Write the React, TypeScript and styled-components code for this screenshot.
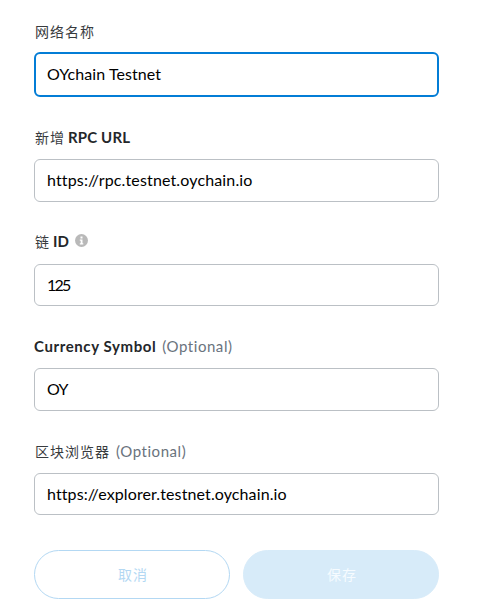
import React from "react";
import styled, { createGlobalStyle } from "styled-components";

const GlobalStyle = createGlobalStyle`
  body {
    margin: 0;
    background: #fff;
    font-family: Lato, "Noto Sans CJK SC", sans-serif;
    overflow: hidden;
  }
  * { box-sizing: border-box; }
`;

const Form = styled.form`
  display: flex;
  flex-direction: column;
  width: 405px;
  margin: 20px 0 0 34px;
`;

const Field = styled.label<{ $gap: number }>`
  display: flex;
  flex-direction: column;
  margin-bottom: ${(p) => p.$gap}px;
`;

const Heading = styled.span<{ $space: number }>`
  display: flex;
  align-items: center;
  height: 22px;
  margin-bottom: ${(p) => p.$space}px;
  color: #24272a;
  font-size: 15px;
  line-height: 22px;
  white-space: pre;
`;

const Han = styled.span`
  margin-left: 1px;
  color: #383b3e;
  font-family: "Noto Sans CJK SC", sans-serif;
  font-size: 14px;
  font-weight: 400;
  letter-spacing: 1px;
`;

const Strong = styled.span<{ $track?: number; $left?: number }>`
  margin-left: ${(p) => p.$left ?? 0}px;
  font-weight: 700;
  letter-spacing: ${(p) => p.$track ?? 0}px;
`;

const Optional = styled.span`
  margin-left: 6px;
  color: #6a737d;
  letter-spacing: 0.55px;
`;

const InfoIcon = styled.svg`
  margin: -1px 0 0 6px;
`;

const TextInput = styled.input<{ $active?: boolean; $height: number; $track: number }>`
  width: 100%;
  height: ${(p) => p.$height}px;
  padding: 0 ${(p) => (p.$active ? 11 : 12)}px 2px;
  border: ${(p) => (p.$active ? "2px solid #037dd6" : "1px solid #bbc0c5")};
  border-radius: 6px;
  outline: none;
  background: #fff;
  color: #000;
  font: 400 16px Lato, sans-serif;
  letter-spacing: ${(p) => p.$track}px;
`;

const Actions = styled.div`
  display: flex;
  gap: 13px;
`;

const Button = styled.button<{ $filled?: boolean }>`
  flex: 1;
  height: 49px;
  padding: 0 0 2px 2px;
  border: 1px solid ${(p) => (p.$filled ? "#d7ebf9" : "#b3d8f3")};
  border-radius: 25px;
  background: ${(p) => (p.$filled ? "#d7ebf9" : "#fff")};
  color: ${(p) => (p.$filled ? "#f6fbff" : "#b3d8f3")};
  font: 400 14px "Noto Sans CJK SC", sans-serif;
  letter-spacing: 1px;
`;

export default function App() {
  return (
    <>
      <GlobalStyle />
      <Form>
        <Field $gap={29}>
          <Heading $space={10}><Han>网络名称</Han></Heading>
          <TextInput $active $height={45} $track={0.07} readOnly value="OYchain Testnet" />
        </Field>
        <Field $gap={28}>
          <Heading $space={11}>
            <Han>新增</Han>
            <Strong $left={3} $track={0.15}>RPC URL</Strong>
          </Heading>
          <TextInput $height={43} $track={0.14} readOnly value="https://rpc.testnet.oychain.io" />
        </Field>
        <Field $gap={29}>
          <Heading $space={12}>
            <Han>链</Han>
            <Strong $left={3}>ID</Strong>
            <InfoIcon width="13" height="13" viewBox="0 0 13 13">
              <circle cx="6.5" cy="6.5" r="6.5" fill="#b9b9b9" />
              <path d="M5.5 2.5h2v2h-2zM4.8 5.5h2.7v3.7h.8v1.3H4.8V9.2h.9V6.7h-.9z" fill="#fff" />
            </InfoIcon>
          </Heading>
          <TextInput $height={42} $track={-1.8} readOnly value="125" />
        </Field>
        <Field $gap={29}>
          <Heading $space={11}>
            <Strong $track={0.6}>Currency Symbol</Strong>
            <Optional>(Optional)</Optional>
          </Heading>
          <TextInput $height={43} $track={-0.6} readOnly value="OY" />
        </Field>
        <Field $gap={35}>
          <Heading $space={11}>
            <Han>区块浏览器</Han>
            <Optional>(Optional)</Optional>
          </Heading>
          <TextInput $height={42} $track={0.11} readOnly value="https://explorer.testnet.oychain.io" />
        </Field>
        <Actions>
          <Button type="button">取消</Button>
          <Button type="button" $filled>保存</Button>
        </Actions>
      </Form>
    </>
  );
}
